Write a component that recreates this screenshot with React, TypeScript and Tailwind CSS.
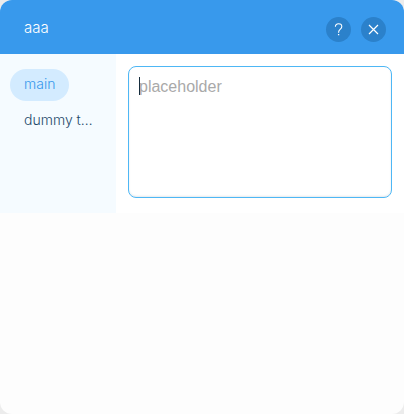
import { useState } from "react";

const tabs = ["main", "dummy t…"];

export default function App() {
  const [active, setActive] = useState("main");

  return (
    <div className="min-h-screen bg-[#ececec] font-['Liberation_Sans',Arial,sans-serif]">
      <main className="flex min-h-screen flex-col overflow-hidden rounded-xl bg-[#fdfdfd]">
        <header className="flex h-[54px] items-center justify-between bg-[#3899ec] pt-1 pr-[18px] pl-6">
          <h1 className="pb-0.5 font-[Inter,sans-serif] text-[15px] leading-6 font-light text-white">aaa</h1>
          <div className="flex gap-[10px]">
            <button
              type="button"
              aria-label="Help"
              className="flex size-[25px] items-center justify-center rounded-full bg-[#2b81cb] text-white"
            >
              <svg viewBox="0 0 25 25" className="size-[25px]" fill="none" stroke="currentColor" strokeWidth="1.1">
                <path d="M9.4 9.8C9.4 7.8 10.7 6.7 12.6 6.7s3.2 1.1 3.2 2.8c0 1.4-.8 2.1-1.7 2.9-.9.8-1.5 1.4-1.5 2.8v.5" />
                <path d="M12.6 16.9v1.3" strokeWidth="1.3" />
              </svg>
            </button>
            <button
              type="button"
              aria-label="Close"
              className="flex size-[25px] items-center justify-center rounded-full bg-[#2b81cb] text-white"
            >
              <svg viewBox="0 0 25 25" className="size-[25px]" fill="none" stroke="currentColor" strokeWidth="1.2">
                <path d="M8 8l9 9M17 8l-9 9" />
              </svg>
            </button>
          </div>
        </header>
        <div className="flex bg-white">
          <nav className="flex w-[116px] shrink-0 flex-col items-start gap-1 bg-[#f5fbff] px-[10px] pt-[15px] font-[Inter,sans-serif] font-light">
            {tabs.map((tab) => (
              <button
                key={tab}
                type="button"
                onClick={() => setActive(tab)}
                className={
                  tab === active
                    ? "h-8 rounded-full bg-[#d3ebff] px-[14px] pb-0.5 text-sm whitespace-nowrap text-[#3899ec]"
                    : "h-8 rounded-full px-[14px] pb-0.5 text-sm whitespace-nowrap text-[#1f4a6b]"
                }
              >
                {tab}
              </button>
            ))}
          </nav>
          <div className="relative flex min-w-0 grow p-3 pb-[15px]">
            <textarea
              aria-label="Message"
              placeholder="placeholder"
              className="h-[132px] w-full resize-none rounded-lg border border-[#4eb7f5] bg-white px-[10px] py-2 text-base leading-6 text-[#162d3d] caret-transparent shadow-[inset_0_-1px_2px_#e4e9ec] outline-none placeholder:text-[#a9a9a9]"
            />
            <span aria-hidden="true" className="absolute top-[23px] left-[23px] h-[18px] w-px bg-[#162d3d]" />
          </div>
        </div>
      </main>
    </div>
  );
}
